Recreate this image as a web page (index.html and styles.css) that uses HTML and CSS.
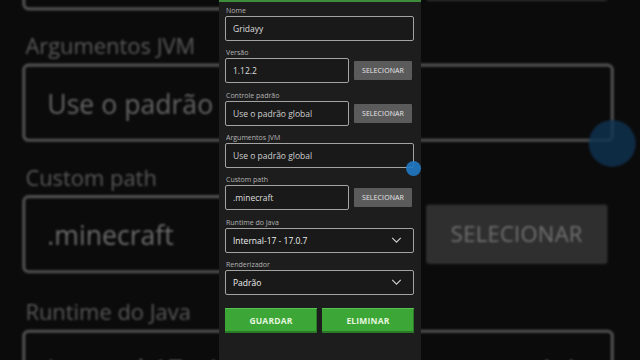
FILE: index.html
```html
<!DOCTYPE html>
<html lang="pt">
<head>
<meta charset="utf-8">
<title>Perfil</title>
<link rel="stylesheet" href="styles.css">
</head>
<body>
<div class="stage">
  <div class="ghost" aria-hidden="true">
    <div class="panel">
      <div class="form">
        <div class="field"><div class="label">Nome</div><div class="control">Gridayy</div></div>
        <div class="field"><div class="label">Versão</div><div class="row"><div class="control">1.12.2</div><div class="pick">SELECIONAR</div></div></div>
        <div class="field"><div class="label">Controle padrão</div><div class="row"><div class="control dim">Use o padrão global</div><div class="pick">SELECIONAR</div></div></div>
        <div class="field"><div class="label">Argumentos JVM</div><div class="control dim">Use o padrão global</div></div>
        <div class="field"><div class="label">Custom path</div><div class="row"><div class="control">.minecraft</div><div class="pick">SELECIONAR</div></div></div>
        <div class="field"><div class="label">Runtime do Java</div><div class="control select"><span>Internal-17 - 17.0.7</span><svg class="chev" viewBox="0 0 12 7"><polyline points="1,1 6,6 11,1"/></svg></div></div>
        <div class="field"><div class="label">Renderizador</div><div class="control select"><span>Padrão</span><svg class="chev" viewBox="0 0 12 7"><polyline points="1,1 6,6 11,1"/></svg></div></div>
        <div class="actions"><div class="green">GUARDAR</div><div class="green">ELIMINAR</div></div>
      </div>
      <span class="touch"></span>
    </div>
  </div>

  <div class="panel main">
    <div class="form">
      <div class="field"><div class="label">Nome</div><div class="control">Gridayy</div></div>
      <div class="field"><div class="label">Versão</div><div class="row"><div class="control">1.12.2</div><div class="pick">SELECIONAR</div></div></div>
      <div class="field"><div class="label">Controle padrão</div><div class="row"><div class="control dim">Use o padrão global</div><div class="pick">SELECIONAR</div></div></div>
      <div class="field"><div class="label">Argumentos JVM</div><div class="control dim">Use o padrão global</div></div>
      <div class="field"><div class="label">Custom path</div><div class="row"><div class="control">.minecraft</div><div class="pick">SELECIONAR</div></div></div>
      <div class="field"><div class="label">Runtime do Java</div><div class="control select"><span>Internal-17 - 17.0.7</span><svg class="chev" viewBox="0 0 12 7"><polyline points="1,1 6,6 11,1"/></svg></div></div>
      <div class="field"><div class="label">Renderizador</div><div class="control select"><span>Padrão</span><svg class="chev" viewBox="0 0 12 7"><polyline points="1,1 6,6 11,1"/></svg></div></div>
      <div class="actions"><div class="green">GUARDAR</div><div class="green">ELIMINAR</div></div>
    </div>
    <span class="touch"></span>
  </div>
</div>
</body>
</html>
```
FILE: styles.css
```css
html, body {
  margin: 0;
  padding: 0;
  background: #0b0b0b;
}
.stage {
  position: relative;
  width: 640px;
  height: 360px;
  overflow: hidden;
  background: #0b0b0b;
  display: flex;
  justify-content: center;
  font-family: "Open Sans", "Noto Sans", sans-serif;
}
.ghost {
  position: absolute;
  left: 0;
  top: 0;
  width: 640px;
  height: 360px;
  display: flex;
  justify-content: center;
  transform-origin: 0 0;
  transform: translate(-682px, -384px) scale(3.13);
  opacity: 0.45;
  filter: blur(0.35px);
}
.ghost .panel {
  background: transparent;
  border-top-color: transparent;
}
.ghost .control {
  background: transparent;
}
.ghost .touch {
  background: rgba(20, 100, 170, 0.8);
}
.panel {
  position: relative;
  width: 202px;
  height: 360px;
  box-sizing: border-box;
  background: #1d1d1d;
  border-top: 2px solid #3f8d3a;
  padding: 4px 7px 0 6px;
  z-index: 1;
}
.form {
  display: flex;
  flex-direction: column;
  gap: 7.33px;
}
.field {
  display: flex;
  flex-direction: column;
}
.label {
  height: 10px;
  line-height: 10px;
  font-size: 7px;
  color: #b3b3b3;
  padding-left: 1px;
  white-space: nowrap;
}
.row {
  display: flex;
  align-items: center;
}
.row .control {
  flex: 1;
}
.control {
  height: 25px;
  box-sizing: border-box;
  border: 1px solid #a3a3a3;
  border-radius: 2px;
  background: #191919;
  padding: 0 7px;
  display: flex;
  align-items: center;
  font-size: 8.5px;
  color: #dedede;
  white-space: nowrap;
}
.control.dim {
  color: #cfcfcf;
}
.select {
  justify-content: space-between;
  padding-right: 11px;
  color: #efefef;
}
.chev {
  width: 11px;
  height: 6px;
  fill: none;
  stroke: #d0d0d0;
  stroke-width: 1.3;
}
.pick {
  width: 58px;
  height: 19px;
  margin: 0 2px 0 5px;
  background: #5b5b5b;
  border-radius: 1px;
  color: #e8e8e8;
  font-size: 7px;
  display: flex;
  align-items: center;
  justify-content: center;
  letter-spacing: 0.1px;
}
.actions {
  margin-top: 6px;
  display: grid;
  grid-template-columns: 1fr 1fr;
  gap: 5px;
}
.green {
  height: 25px;
  background: #3ca637;
  box-shadow: inset 0 1px 0 #5ac253, inset 0 -2px 0 #2b7a27, inset -1px 0 0 #2b7a27;
  color: #e4f6df;
  font-weight: 700;
  font-size: 8.5px;
  display: flex;
  align-items: center;
  justify-content: center;
  letter-spacing: 0.2px;
}
.touch {
  position: absolute;
  left: 187px;
  top: 159px;
  width: 15px;
  height: 15px;
  border-radius: 50%;
  background: rgba(33, 122, 200, 0.9);
}
```
